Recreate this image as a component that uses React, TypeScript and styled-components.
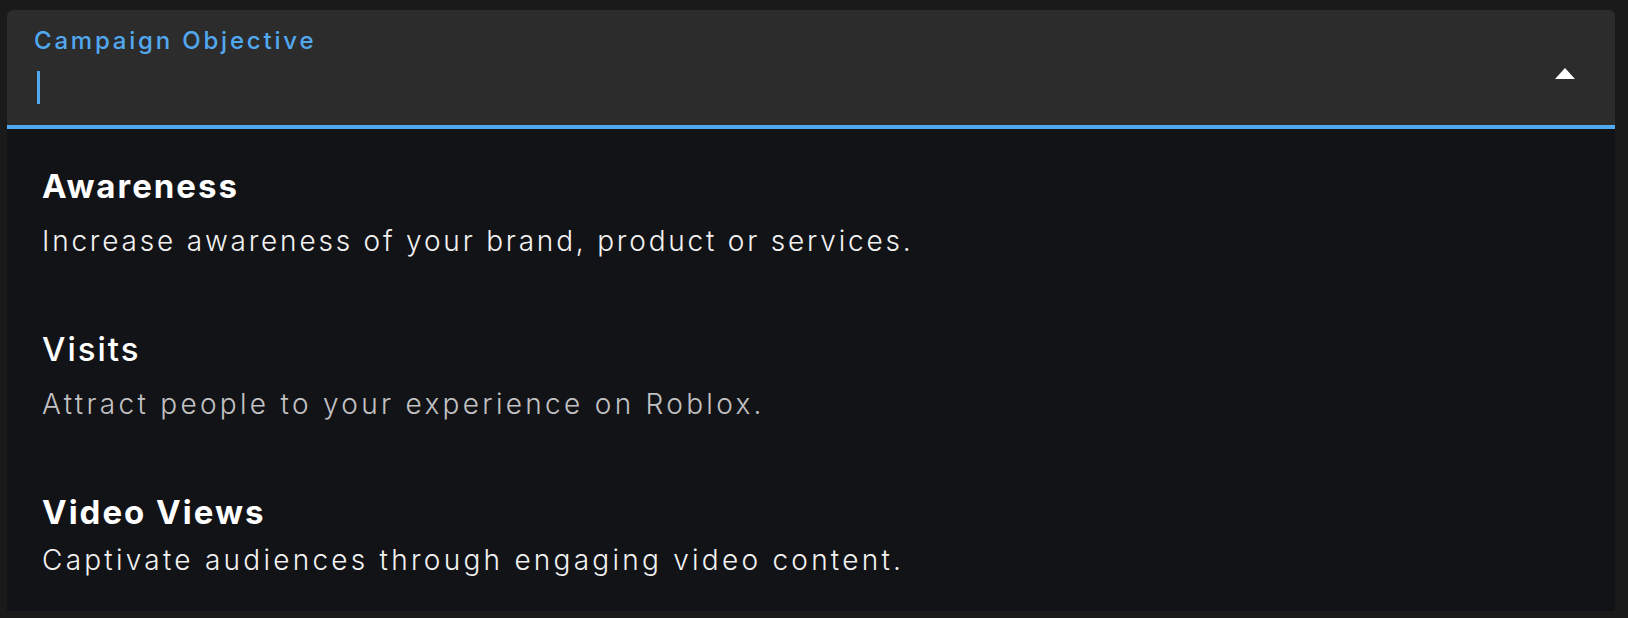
import styled, { createGlobalStyle } from "styled-components";

const GlobalStyle = createGlobalStyle`
  html, body {
    margin: 0;
    padding: 0;
    background-color: #1a1a1a;
  }

  body {
    font-family: Inter, "Noto Sans", "Liberation Sans", sans-serif;
    -webkit-font-smoothing: antialiased;
  }
`;

const Page = styled.div`
  width: 1628px;
  height: 618px;
  box-sizing: border-box;
  padding: 10px 13px 0 7px;
  background-color: #1a1a1a;
`;

const Field = styled.div`
  height: 119px;
  box-sizing: border-box;
  padding: 17px 40px 0 27px;
  display: flex;
  align-items: flex-start;
  justify-content: space-between;
  background-color: #2c2c2c;
  border-radius: 6px 6px 0 0;
  border-bottom: 4px solid #52a8ef;
`;

const FieldText = styled.div`
  display: flex;
  flex-direction: column;
`;

const Label = styled.label`
  font-size: 24px;
  line-height: 28px;
  font-weight: 500;
  letter-spacing: 2.8px;
  color: #52a8ef;
`;

const Caret = styled.span`
  display: block;
  width: 3px;
  height: 33px;
  margin: 16px 0 0 3px;
  background-color: #52a8ef;
`;

const ArrowUp = styled.span`
  width: 0;
  height: 0;
  margin-top: 41px;
  border-left: 10px solid transparent;
  border-right: 10px solid transparent;
  border-bottom: 11px solid #ffffff;
`;

const Menu = styled.ul`
  list-style: none;
  margin: 0;
  padding: 0;
  height: 482px;
  background-color: #121317;
`;

const Option = styled.li`
  padding: 37px 35px 33px;
  cursor: pointer;
`;

const OptionTitle = styled.div<{ $weight: number }>`
  font-size: 33px;
  line-height: 40px;
  font-weight: ${(p) => p.$weight};
  letter-spacing: 2px;
  color: #ffffff;
`;

const OptionText = styled.div<{
  $gap: number;
  $tracking: number;
  $muted?: boolean;
}>`
  margin-top: ${(p) => p.$gap}px;
  font-size: 28px;
  line-height: 36px;
  font-weight: 300;
  letter-spacing: ${(p) => p.$tracking}px;
  color: ${(p) => (p.$muted ? "#c2c2c4" : "#f2f2f2")};
`;

const options = [
  {
    title: "Awareness",
    text: "Increase awareness of your brand, product or services.",
    weight: 700,
    gap: 17,
    tracking: 2.8,
  },
  {
    title: "Visits",
    text: "Attract people to your experience on Roblox.",
    weight: 500,
    gap: 17,
    tracking: 3.3,
    muted: true,
  },
  {
    title: "Video Views",
    text: "Captivate audiences through engaging video content.",
    weight: 700,
    gap: 10,
    tracking: 3.25,
  },
];

export default function App() {
  return (
    <>
      <GlobalStyle />
      <Page>
        <Field>
          <FieldText>
            <Label>Campaign Objective</Label>
            <Caret />
          </FieldText>
          <ArrowUp />
        </Field>
        <Menu role="listbox">
          {options.map((o) => (
            <Option key={o.title} role="option">
              <OptionTitle $weight={o.weight}>{o.title}</OptionTitle>
              <OptionText $gap={o.gap} $tracking={o.tracking} $muted={o.muted}>
                {o.text}
              </OptionText>
            </Option>
          ))}
        </Menu>
      </Page>
    </>
  );
}
